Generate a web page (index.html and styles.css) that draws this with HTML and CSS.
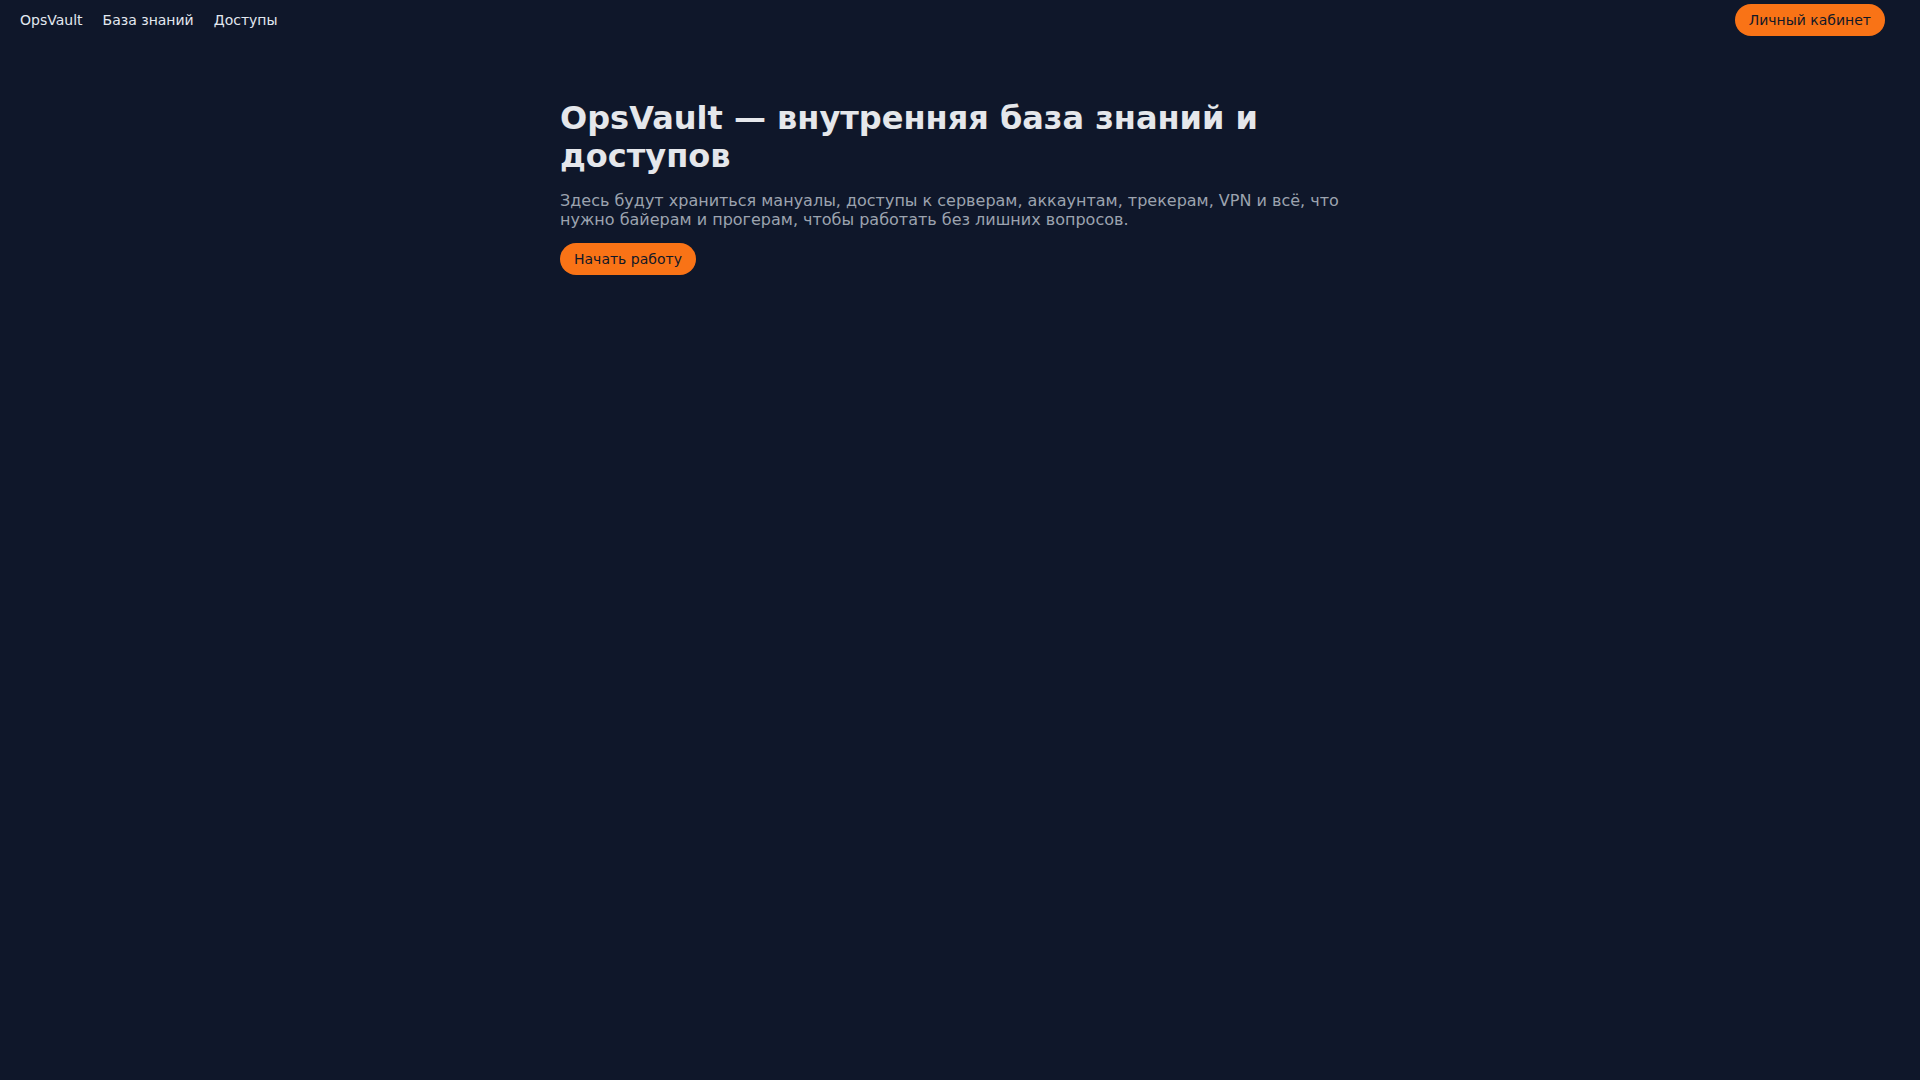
FILE: index.html
```html
<!DOCTYPE html>
<html lang="ru">
<head>
<meta charset="utf-8">
<title>OpsVault</title>
<link rel="stylesheet" href="styles.css">
</head>
<body>
<header class="topbar">
  <nav class="nav">
    <a class="nav-link" href="#">OpsVault</a>
    <a class="nav-link" href="#">База знаний</a>
    <a class="nav-link" href="#">Доступы</a>
  </nav>
  <a class="btn" href="#">Личный кабинет</a>
</header>
<main class="hero">
  <h1 class="hero-title">OpsVault — внутренняя база знаний и доступов</h1>
  <p class="hero-text">Здесь будут храниться мануалы, доступы к серверам, аккаунтам, трекерам, VPN и всё, что нужно байерам и прогерам, чтобы работать без лишних вопросов.</p>
  <div class="hero-actions">
    <a class="btn" href="#">Начать работу</a>
  </div>
</main>
</body>
</html>
```
FILE: styles.css
```css
* { box-sizing: border-box; }
html, body {
  margin: 0;
  padding: 0;
  background: #0f172a;
  min-height: 100%;
}
body {
  font-family: "DejaVu Sans", sans-serif;
  color: #e5e7eb;
  min-height: 1080px;
}
a { text-decoration: none; }
.topbar {
  display: flex;
  align-items: center;
  justify-content: space-between;
  padding: 4px 35px 4px 20px;
}
.nav {
  display: flex;
  gap: 20px;
}
.nav-link {
  font-size: 14px;
  color: #e2e8f0;
}
.btn {
  display: inline-block;
  background: #f97316;
  color: #111827;
  font-size: 14px;
  padding: 8px 14px;
  border-radius: 999px;
  line-height: 16px;
}
.hero {
  max-width: 800px;
  margin: 0 auto;
  padding-top: 59px;
}
.hero-title {
  margin: 0;
  font-size: 32px;
  line-height: 38px;
  font-weight: 700;
  color: #e5e7eb;
}
.hero-text {
  margin: 16px 0 0;
  font-size: 16px;
  line-height: 19px;
  color: #9ca3af;
}
.hero-actions {
  margin-top: 14px;
}
```
